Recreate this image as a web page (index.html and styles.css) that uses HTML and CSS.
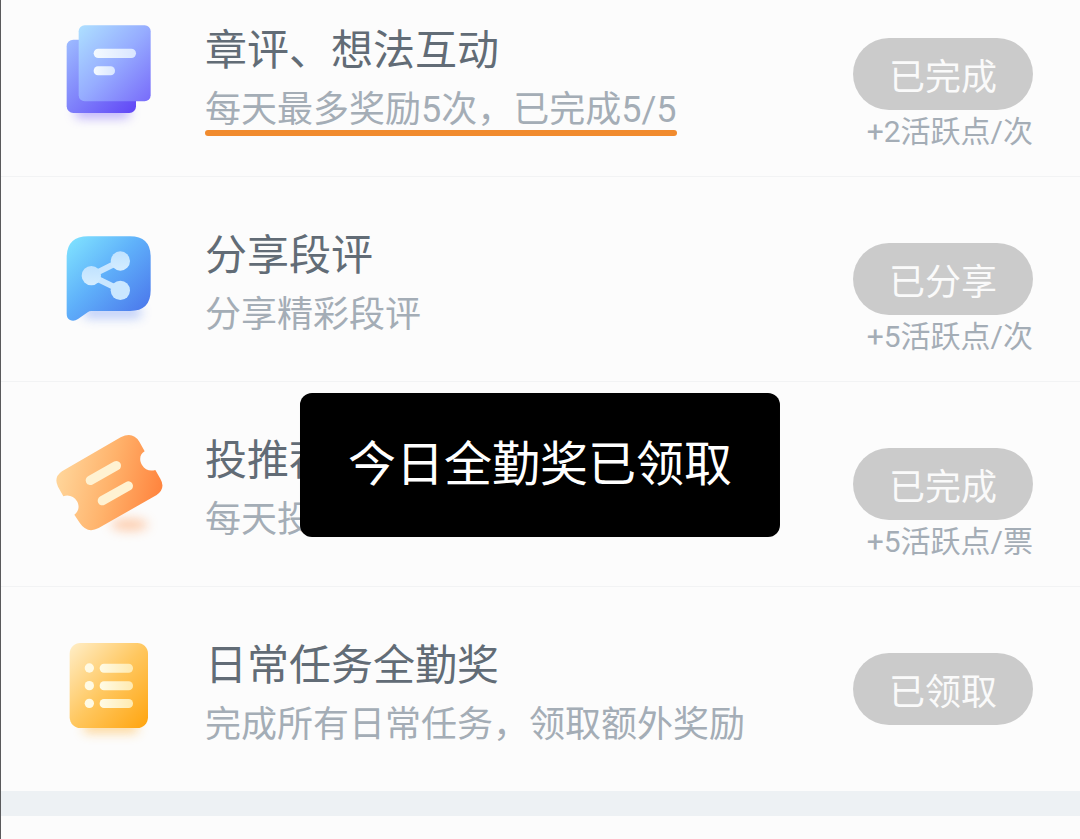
FILE: index.html
```html
<!DOCTYPE html>
<html lang="zh-CN">
<head>
  <meta charset="UTF-8">
  <meta name="viewport" content="width=device-width, initial-scale=1">
  <title>日常任务</title>
  <link rel="stylesheet" href="styles.css">
</head>
<body>
  <main class="page">
    <ul class="task-list">
      <li class="task">
        <svg class="task-icon" viewBox="0 0 420 420" aria-hidden="true">
          <defs>
            <linearGradient id="noteBack" x1="0" y1="0" x2="1" y2="1">
              <stop offset="0" stop-color="#9dbcff"/>
              <stop offset="1" stop-color="#6045f6"/>
            </linearGradient>
            <linearGradient id="noteFront" x1="0" y1="0" x2="1" y2="1">
              <stop offset="0" stop-color="#aee0ff"/>
              <stop offset="0.5" stop-color="#96acff"/>
              <stop offset="1" stop-color="#786bfa"/>
            </linearGradient>
            <linearGradient id="noteLine" x1="0" y1="0" x2="1" y2="0">
              <stop offset="0" stop-color="#f4faff"/>
              <stop offset="1" stop-color="#d9e6ff"/>
            </linearGradient>
            <filter id="blur" x="-50%" y="-200%" width="200%" height="500%">
              <feGaussianBlur stdDeviation="16"/>
            </filter>
          </defs>
          <rect x="105" y="318" width="165" height="36" rx="16" fill="#7a62f8" opacity="0.5" filter="url(#blur)"/>
          <rect x="80" y="119" width="208" height="220" rx="20" fill="url(#noteBack)"/>
          <rect x="116" y="76" width="216" height="228" rx="18" fill="url(#noteFront)"/>
          <rect x="161" y="146" width="127" height="28" rx="14" fill="url(#noteLine)"/>
          <rect x="161" y="199" width="64" height="27" rx="13" fill="url(#noteLine)"/>
        </svg>
        <div class="task-text">
          <h2 class="task-title">章评、想法互动</h2>
          <p class="task-desc"><span class="marked">每天最多奖励5次，已完成5/5</span></p>
        </div>
        <div class="task-action">
          <button class="task-button" type="button" disabled>已完成</button>
          <span class="task-points">+2活跃点/次</span>
        </div>
      </li>

      <li class="task">
        <svg class="task-icon" viewBox="0 -30 420 420" aria-hidden="true">
          <defs>
            <linearGradient id="shareBg" x1="0" y1="0" x2="1" y2="1">
              <stop offset="0" stop-color="#82e6ff"/>
              <stop offset="0.45" stop-color="#5fb0fa"/>
              <stop offset="0.9" stop-color="#4c7aec"/>
            </linearGradient>
            <linearGradient id="shareDot" x1="0" y1="0" x2="0" y2="1">
              <stop offset="0" stop-color="#bfe2ff"/>
              <stop offset="1" stop-color="#d5edff"/>
            </linearGradient>
          </defs>
          <rect x="130" y="274" width="175" height="36" rx="16" fill="#6d93f5" opacity="0.45" filter="url(#blur)"/>
          <path d="M144 64H270Q332 64 332 126V226Q332 288 270 288H154Q148 288 143 292L114 312Q102 320 90 315Q80 310 80 296V128Q80 64 144 64Z" fill="url(#shareBg)"/>
          <path d="M241 138L153 182L241 225" fill="none" stroke="#c9e6ff" stroke-width="18"/>
          <circle cx="241" cy="138" r="29" fill="url(#shareDot)"/>
          <circle cx="154" cy="182" r="29" fill="url(#shareDot)"/>
          <circle cx="241" cy="226" r="29" fill="#cae7ff"/>
        </svg>
        <div class="task-text">
          <h2 class="task-title">分享段评</h2>
          <p class="task-desc">分享精彩段评</p>
        </div>
        <div class="task-action">
          <button class="task-button" type="button" disabled>已分享</button>
          <span class="task-points">+5活跃点/次</span>
        </div>
      </li>

      <li class="task">
        <svg class="task-icon" viewBox="0 -30 420 420" aria-hidden="true">
          <defs>
            <linearGradient id="ticketBg" gradientUnits="userSpaceOnUse" x1="60" y1="160" x2="355" y2="225">
              <stop offset="0" stop-color="#ffd498"/>
              <stop offset="0.5" stop-color="#ffb26b"/>
              <stop offset="1" stop-color="#ff8640"/>
            </linearGradient>
          </defs>
          <ellipse cx="268" cy="314" rx="56" ry="18" fill="#ff9c5c" opacity="0.5" filter="url(#blur)"/>
          <path d="M66 154L242 52Q278 33 298 65L314 94C299 102 297 120 306 135C315 149 329 155 346 150L361 176Q378 205 350 225L176 324Q142 342 120 310L103 284C117 274 119 258 111 244C102 230 87 223 70 229L54 200Q40 172 66 154Z" fill="url(#ticketBg)"/>
          <path d="M151 181L229 137" stroke="#fff2d2" stroke-width="28" stroke-linecap="round"/>
          <path d="M187 242L265 198" stroke="#fff2d2" stroke-width="28" stroke-linecap="round"/>
        </svg>
        <div class="task-text">
          <h2 class="task-title">投推荐票</h2>
          <p class="task-desc">每天投推荐票</p>
        </div>
        <div class="task-action">
          <button class="task-button" type="button" disabled>已完成</button>
          <span class="task-points">+5活跃点/票</span>
        </div>
      </li>

      <li class="task">
        <svg class="task-icon" viewBox="0 -30 420 420" aria-hidden="true">
          <defs>
            <linearGradient id="listBg" x1="0" y1="0" x2="1" y2="1">
              <stop offset="0" stop-color="#ffeec8"/>
              <stop offset="0.5" stop-color="#ffc75f"/>
              <stop offset="1" stop-color="#ffa40e"/>
            </linearGradient>
            <linearGradient id="listLine" x1="0" y1="0" x2="1" y2="0">
              <stop offset="0" stop-color="#fffbe6"/>
              <stop offset="1" stop-color="#ffeab0"/>
            </linearGradient>
          </defs>
          <rect x="130" y="290" width="165" height="34" rx="16" fill="#ffb031" opacity="0.5" filter="url(#blur)"/>
          <rect x="89" y="54" width="235" height="255" rx="32" fill="url(#listBg)"/>
          <g fill="#fffae4">
            <circle cx="148" cy="129" r="14"/>
            <circle cx="148" cy="182" r="14"/>
            <circle cx="148" cy="235" r="14"/>
          </g>
          <g fill="url(#listLine)">
            <rect x="179" y="116" width="100" height="27" rx="13"/>
            <rect x="179" y="169" width="100" height="27" rx="13"/>
            <rect x="179" y="222" width="100" height="27" rx="13"/>
          </g>
        </svg>
        <div class="task-text">
          <h2 class="task-title">日常任务全勤奖</h2>
          <p class="task-desc">完成所有日常任务，领取额外奖励</p>
        </div>
        <div class="task-action">
          <button class="task-button" type="button" disabled>已领取</button>
        </div>
      </li>
    </ul>
    <div class="section-gap"></div>
  </main>

  <div class="toast" role="status">今日全勤奖已领取</div>
</body>
</html>
```
FILE: styles.css
```css
* {
  box-sizing: border-box;
}

body {
  margin: 0;
  background: #fcfcfc;
  font-family: Roboto, "Noto Sans CJK SC", sans-serif;
}

.page {
  min-height: 100vh;
  border-left: 1px solid #5a5a5c;
  overflow: hidden;
}

/* list is scrolled a little past its first row */
.task-list {
  list-style: none;
  margin: -28px 0 0;
  padding: 0;
}

.task {
  display: flex;
  align-items: flex-start;
  min-height: 205px;
  padding: 28px 47px 22px 39px;
  border-bottom: 1px solid #f2f3f4;
}

.task:last-child {
  border-bottom-color: #edf1f4;
}

.task-icon {
  flex: none;
  width: 140px;
  height: 140px;
}

.task-text {
  flex: 1;
  min-width: 0;
  padding: 21px 0 0 25px;
}

.task-title {
  margin: 0;
  font-size: 42px;
  font-weight: 400;
  line-height: 60px;
  color: #626c76;
}

.task-desc {
  margin: 0;
  font-size: 36px;
  line-height: 58px;
  color: #a4adb6;
}

.marked {
  position: relative;
}

.marked::after {
  content: "";
  position: absolute;
  left: 0;
  right: 0;
  bottom: -5px;
  height: 6px;
  border-radius: 3px;
  background: #f18b2e;
}

.task-action {
  display: flex;
  flex-direction: column;
  align-items: flex-end;
  padding-top: 38px;
}

.task-button {
  width: 180px;
  height: 72px;
  padding: 0;
  border: none;
  border-radius: 36px;
  background: #cbcbcb;
  color: #fafafa;
  font-family: inherit;
  font-size: 36px;
}

.task-points {
  font-size: 30px;
  line-height: 44px;
  color: #a4adb6;
  white-space: nowrap;
}

.section-gap {
  height: 24px;
  background: #edf1f4;
}

.toast {
  position: fixed;
  left: 50%;
  bottom: 36%;
  transform: translateX(-50%);
  padding: 36px 48px;
  border-radius: 12px;
  background: #000;
  color: #fff;
  font-size: 48px;
  line-height: 72px;
  white-space: nowrap;
}
```
